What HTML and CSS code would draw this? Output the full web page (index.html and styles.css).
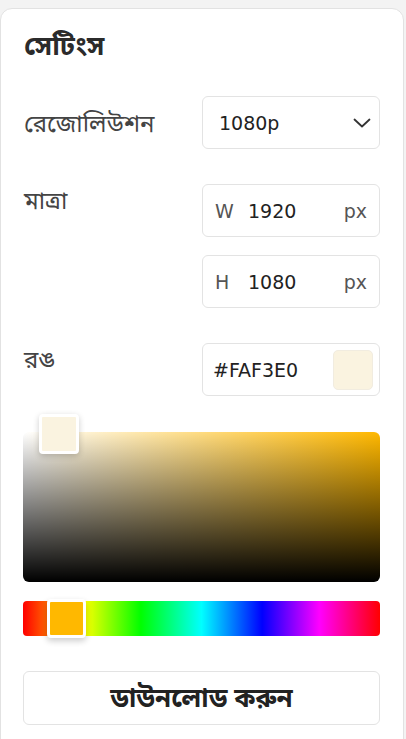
FILE: index.html
```html
<!DOCTYPE html>
<html lang="bn">
<head>
<meta charset="utf-8">
<title>সেটিংস</title>
<link rel="stylesheet" href="styles.css">
</head>
<body>
<div class="card">
  <h2 class="title">সেটিংস</h2>

  <div class="row row-center">
    <div class="label">রেজোলিউশন</div>
    <div class="field select">
      <span class="value">1080p</span>
      <svg class="chev" width="18" height="12" viewBox="0 0 18 12"><path d="M1.5 2.5 L9 9.5 L16.5 2.5" fill="none" stroke="#333" stroke-width="1.8" stroke-linecap="round" stroke-linejoin="round"/></svg>
    </div>
  </div>

  <div class="row">
    <div class="label">মাত্রা</div>
    <div class="stack">
      <div class="field">
        <span class="prefix">W</span><span class="value num">1920</span><span class="unit">px</span>
      </div>
      <div class="field">
        <span class="prefix">H</span><span class="value num">1080</span><span class="unit">px</span>
      </div>
    </div>
  </div>

  <div class="row">
    <div class="label">রঙ</div>
    <div class="field color">
      <span class="value">#FAF3E0</span>
      <span class="swatch"></span>
    </div>
  </div>

  <div class="picker">
    <div class="sv"></div>
    <div class="sv-thumb"></div>
  </div>

  <div class="hue">
    <div class="hue-thumb"></div>
  </div>

  <button class="download">ডাউনলোড করুন</button>
</div>
</body>
</html>
```

FILE: styles.css
```css
* { box-sizing: border-box; }
html, body { margin: 0; padding: 0; }
body {
  background: #f3f3f3;
  width: 406px;
  height: 739px;
  overflow: hidden;
  font-family: "Noto Sans", "Noto Sans Bengali", sans-serif;
}
.card {
  margin: 8px 0 0 0;
  width: 404px;
  height: 760px;
  background: #fff;
  border: 1px solid #e2e2e2;
  border-radius: 12px;
  padding: 0 23px 0 22px;
}
.title {
  margin: 18px 0 0 1px;
  font-size: 27px;
  font-weight: 700;
  color: #2b2b2b;
  line-height: 36px;
  height: 36px;
}
.row {
  display: grid;
  grid-template-columns: 179px 178px;
  align-items: start;
  margin-top: 35px;
}
.title + .row { margin-top: 33px; }
.row-center { align-items: center; }
.label {
  font-size: 24px;
  color: #444;
  padding: 0 0 0 1px;
  line-height: 32px;
}
.stack {
  display: flex;
  flex-direction: column;
  gap: 18px;
}
.field {
  height: 53px;
  border: 1px solid #e3e3e3;
  border-radius: 6px;
  display: flex;
  align-items: center;
  padding: 0 12px 0 12px;
  font-family: "DejaVu Sans", sans-serif;
  font-size: 19px;
  color: #222;
}
.select { padding-left: 16px; padding-right: 8px; }
.select .value { flex: 1; }
.prefix { color: #555; width: 33px; }
.num { flex: 1; }
.unit { color: #555; }
.color { padding: 0 6px 0 10px; }
.color .value { flex: 1; }
.swatch {
  width: 40px;
  height: 40px;
  border-radius: 5px;
  background: #FAF3E0;
  border: 1px solid #f1ece0;
}
.picker {
  position: relative;
  margin-top: 36px;
  width: 357px;
  height: 150px;
}
.sv {
  width: 100%;
  height: 100%;
  border-radius: 6px;
  background:
    linear-gradient(to top, #000 0%, rgba(0,0,0,0) 100%),
    linear-gradient(to right, #fff 0%, #ffb800 100%);
}
.sv-thumb {
  position: absolute;
  left: 16px;
  top: -18px;
  width: 40px;
  height: 40px;
  background: #FAF3E0;
  border: 3px solid #fff;
  border-radius: 4px;
  box-shadow: 0 2px 6px rgba(0,0,0,0.2);
}
.hue {
  position: relative;
  margin-top: 19px;
  width: 357px;
  height: 35px;
  border-radius: 4px;
  background: linear-gradient(to right, #ff0000 0%, #ffff00 17%, #00ff00 33%, #00ffff 50%, #0000ff 67%, #ff00ff 83%, #ff0000 100%);
}
.hue-thumb {
  position: absolute;
  left: 24px;
  top: -2px;
  width: 39px;
  height: 39px;
  background: #ffb800;
  border: 3px solid #fff;
  border-radius: 4px;
  box-shadow: 0 3px 6px rgba(0,0,0,0.2);
}
.download {
  display: block;
  margin-top: 35px;
  width: 357px;
  height: 54px;
  background: #fff;
  border: 1px solid #e3e3e3;
  border-radius: 6px;
  font-family: "Noto Sans", "Noto Sans Bengali", sans-serif;
  font-size: 26px;
  font-weight: 700;
  color: #222;
}
```
